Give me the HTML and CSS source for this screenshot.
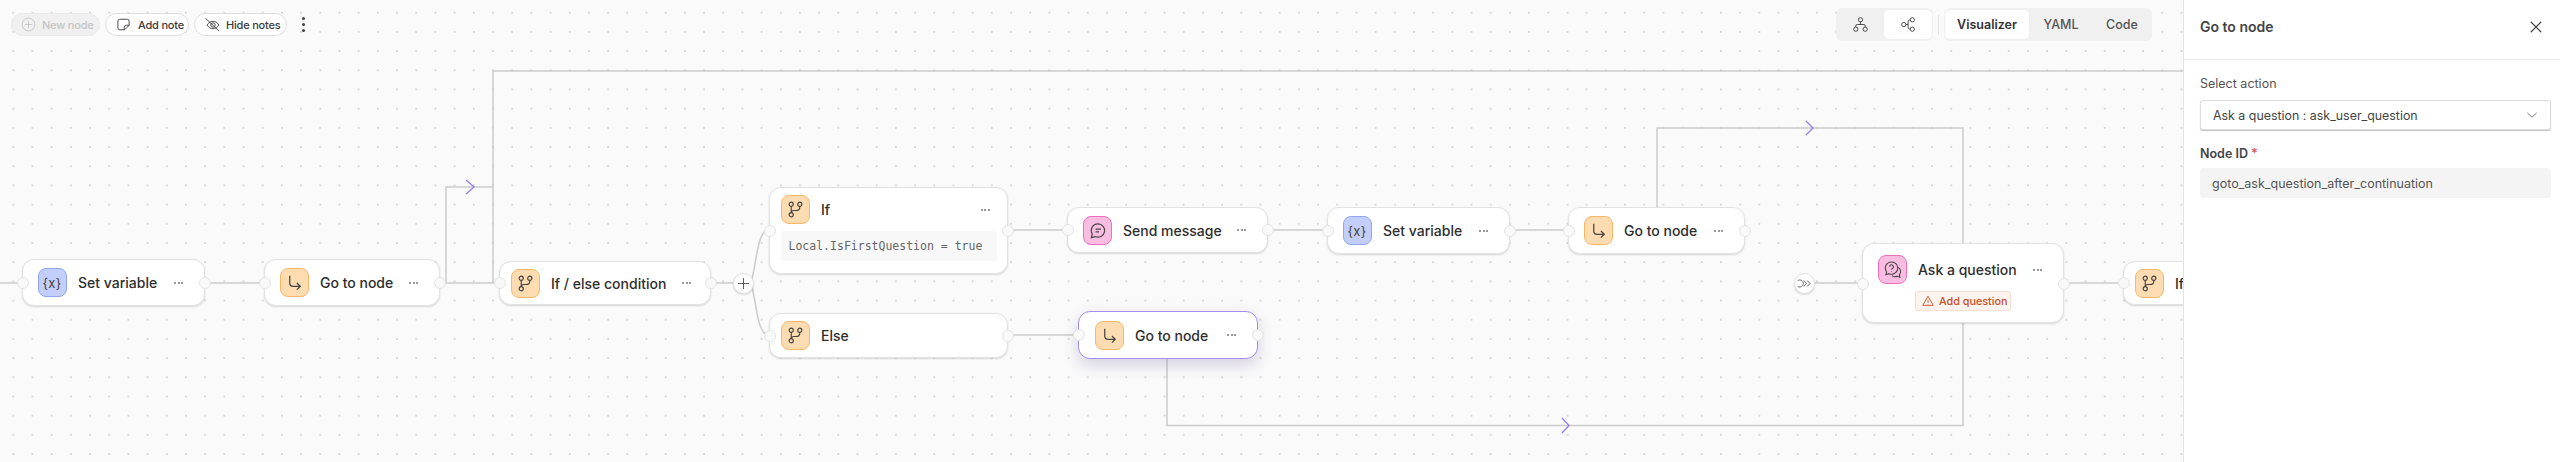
FILE: index.html
```html
<!DOCTYPE html>
<html lang="en">
<head>
<meta charset="utf-8">
<title>Go to node</title>
<link rel="stylesheet" href="styles.css">
</head>
<body>
<svg class="defs" width="0" height="0" aria-hidden="true">
  <symbol id="i-branch" viewBox="0 0 20 20"><g fill="none" stroke="currentColor" stroke-width="1.200"><circle cx="5.500" cy="4.500" r="2.200"/><circle cx="14.500" cy="4.500" r="2.200"/><circle cx="5.500" cy="15.500" r="2.200"/><path d="M5.500 6.700v6.600M14.500 6.700v.8c0 2.200-1.800 3.500-4 3.500H8.200c-1.400 0-2.700.6-2.700 2.200"/></g></symbol>
  <symbol id="i-goto" viewBox="0 0 20 20"><path d="M5 3v7.500c0 2 1.300 3.500 3.500 3.500H16M12.500 10.500l3.600 3.500-3.600 3.500" fill="none" stroke="currentColor" stroke-width="1.300"/></symbol>
  <symbol id="i-msg" viewBox="0 0 20 20"><path d="M10.500 3a7 7 0 1 1-2.800 13.400L3.500 17.500l1-3.800A7 7 0 0 1 10.500 3zM8 8.500h5.500M8 11.500h3.500" fill="none" stroke="currentColor" stroke-width="1.200"/></symbol>
  <symbol id="i-ask" viewBox="0 0 20 20"><g fill="none" stroke="currentColor" stroke-width="1.100"><path d="M9 2a6.500 6.500 0 0 1 0 13c-1 0-1.900-.2-2.700-.6L3 15.500l.8-3.100A6.500 6.500 0 0 1 9 2z"/><path d="M15.500 7.500a5 5 0 0 1 1.700 8l.6 2.700-2.800-1a5.500 5.500 0 0 1-5.500-.7"/><path d="M7 7a2 2 0 1 1 3 1.800c-.7.400-1 .8-1 1.500M9 12v.5"/></g></symbol>
</svg>

<div class="app">
  <main class="canvas">
    <svg class="edges" width="2183" height="462" viewBox="0 0 2183 462" aria-hidden="true">
      <g class="edge">
        <path d="M0 283H22M205 283H264M440 283H499M711 283H744"/>
        <path d="M446 283V187H493M493 283V71H2183M440 283H446"/>
        <path d="M1008 230H1067M1268 230H1327M1510 230H1568"/>
        <path d="M1008 335H1078M1804 283H1862M2064 283H2123"/>
        <path d="M1657 207V128H1963V243M1167 359V425.500H1963V323"/>
        <path d="M751 283C757 262 757 230 769 230M751 283C757 304 757 335 769 335"/>
      </g>
      <g class="chev">
        <path d="M466 180l8 7-8 7"/>
        <path d="M1806 121l7 7-7 7"/>
        <path d="M1562 418l7 7.500-7 7.500"/>
      </g>
    </svg>

    <div class="topbar">
      <div class="tools">
        <button class="pill pill-off"><svg class="pill-icon" viewBox="0 0 20 20"><circle cx="10" cy="10" r="8.500"/><path d="M10 5.500v9M5.500 10h9"/></svg>New node</button>
        <button class="pill pill-note"><svg class="pill-icon" viewBox="0 0 20 20"><path d="M5 3h10a2.500 2.500 0 0 1 2.500 2.500V11l-6 6H5a2.500 2.500 0 0 1-2.500-2.500v-9A2.500 2.500 0 0 1 5 3z"/><path d="M17.500 11h-3.500a3 3 0 0 0-3 3v3"/></svg>Add note</button>
        <button class="pill pill-hide"><svg class="pill-icon eye" viewBox="0 0 24 20"><path d="M4 10c2.500-3.500 5-5 8-5s5.500 1.500 8 5c-2.500 3.500-5 5-8 5s-5.500-1.500-8-5z"/><circle cx="12" cy="10" r="3"/><path d="M2 1l18 17"/></svg>Hide notes</button>
        <span class="kebab"><i></i><i></i><i></i></span>
      </div>
      <div class="views">
        <div class="seg seg-icons">
          <span class="seg-btn"><svg viewBox="0 0 20 20"><circle cx="10" cy="4.500" r="2.500"/><circle cx="4.500" cy="15.500" r="2.500"/><circle cx="15.500" cy="15.500" r="2.500"/><path d="M10 7v3M4.500 13v-1.500a1.500 1.500 0 0 1 1.500-1.500h8a1.500 1.500 0 0 1 1.500 1.500V13"/></svg></span>
          <span class="seg-btn seg-on"><svg viewBox="0 0 20 20"><circle cx="4.500" cy="10" r="2.500"/><circle cx="14.500" cy="4.500" r="2.500"/><circle cx="14.500" cy="15.500" r="2.500"/><path d="M7 10h2.500V7a2.500 2.500 0 0 1 2.500-2.500M9.500 10v3a2.500 2.500 0 0 0 2.500 2.500"/></svg></span>
        </div>
        <span class="views-rule"></span>
        <div class="seg seg-text">
          <span class="tab tab-on">Visualizer</span>
          <span class="tab tab-yaml">YAML</span>
          <span class="tab tab-code">Code</span>
        </div>
      </div>
    </div>

    <div class="node n-set1"><span class="port port-l"></span><span class="ic ic-blue ic-x">{x}</span><span class="title">Set variable</span><span class="more"><i></i><i></i><i></i></span><span class="port port-r"></span></div>
    <div class="node n-goto1"><span class="port port-l"></span><span class="ic ic-orange"><svg><use href="#i-goto"/></svg></span><span class="title">Go to node</span><span class="more"><i></i><i></i><i></i></span><span class="port port-r"></span></div>
    <div class="node n-ifelse"><span class="port port-l"></span><span class="ic ic-orange"><svg><use href="#i-branch"/></svg></span><span class="title">If / else condition</span><span class="more"><i></i><i></i><i></i></span><span class="port port-r"></span></div>
    <span class="round r-plus"><svg viewBox="0 0 20 20"><path d="M10 3.500v13M3.500 10h13"/></svg></span>

    <div class="node node-tall n-if">
      <span class="port port-l port-if"></span>
      <div class="node-head"><span class="ic ic-orange"><svg><use href="#i-branch"/></svg></span><span class="title">If</span><span class="more"><i></i><i></i><i></i></span></div>
      <code class="expr">Local.IsFirstQuestion = true</code>
      <span class="port port-r port-if"></span>
    </div>
    <div class="node n-else"><span class="port port-l"></span><span class="ic ic-orange"><svg><use href="#i-branch"/></svg></span><span class="title">Else</span><span class="port port-r"></span></div>
    <div class="node n-send"><span class="port port-l"></span><span class="ic ic-pink"><svg><use href="#i-msg"/></svg></span><span class="title">Send message</span><span class="more"><i></i><i></i><i></i></span><span class="port port-r"></span></div>
    <div class="node node-sel n-goto-sel"><span class="port port-l"></span><span class="ic ic-orange"><svg><use href="#i-goto"/></svg></span><span class="title">Go to node</span><span class="more"><i></i><i></i><i></i></span><span class="port port-r"></span></div>
    <div class="node n-set2"><span class="port port-l"></span><span class="ic ic-blue ic-x">{x}</span><span class="title">Set variable</span><span class="more"><i></i><i></i><i></i></span><span class="port port-r"></span></div>
    <div class="node n-goto2"><span class="port port-l"></span><span class="ic ic-orange"><svg><use href="#i-goto"/></svg></span><span class="title">Go to node</span><span class="more"><i></i><i></i><i></i></span><span class="port port-r"></span></div>

    <span class="round r-jump"><svg viewBox="0 0 20 20"><path d="M2 6.500c3-1.500 6 0 7 3.500-1 3.500-4 5-7 3.500M9 6.500l3.500 3.500L9 13.500M13 6.500l3.500 3.500-3.500 3.500"/></svg></span>
    <div class="node node-tall n-ask">
      <span class="port port-l port-ask"></span>
      <div class="node-head"><span class="ic ic-pink"><svg><use href="#i-ask"/></svg></span><span class="title">Ask a question</span><span class="more"><i></i><i></i><i></i></span></div>
      <span class="warn"><svg viewBox="0 0 16 16"><path d="M8 2.500l6 10.500H2zM8 6.500v3.500M8 11.300v.7"/></svg>Add question</span>
      <span class="port port-r port-ask"></span>
    </div>
    <div class="node n-iffar"><span class="port port-l"></span><span class="ic ic-orange"><svg><use href="#i-branch"/></svg></span><span class="title">If</span></div>
  </main>

  <aside class="panel">
    <header class="panel-head">
      <h2>Go to node</h2>
      <svg class="close" viewBox="0 0 16 16"><path d="M2 2l12 12M14 2L2 14"/></svg>
    </header>
    <div class="panel-body">
      <label class="lbl">Select action</label>
      <div class="select"><span>Ask a question : ask_user_question</span><svg viewBox="0 0 14 8"><path d="M1.500 1.500L7 6.500l5.500-5"/></svg></div>
      <label class="lbl lbl-strong">Node ID <em>*</em></label>
      <div class="input">goto_ask_question_after_continuation</div>
    </div>
  </aside>
</div>
</body>
</html>
```

FILE: styles.css
```css
* { box-sizing: border-box; }
html, body { margin: 0; height: 100%; }
body { font-family: Inter, "Liberation Sans", sans-serif; color: #333; overflow: hidden; }
.defs { position: absolute; }
.app { display: flex; width: 2560px; height: 462px; }

.canvas {
  position: relative;
  width: 2184px;
  height: 462px;
  overflow: hidden;
  background-color: #fafafa;
  background-image: radial-gradient(circle, #cfcfcf 0.6px, transparent 1px);
  background-size: 19.2px 19.2px;
  background-position: 3.700px 3.100px;
  border-right: 1px solid #e3e3e3;
}
.edges { position: absolute; left: 0; top: 0; }
.edge path { fill: none; stroke: #cbcbcb; stroke-width: 1.500; }
.chev path { fill: none; stroke: #9a7bea; stroke-width: 1.300; }

.topbar { position: relative; display: flex; justify-content: space-between; align-items: flex-start; padding: 8px 31px 0 11px; }
.tools { display: flex; align-items: center; gap: 5px; padding-top: 5px; }
.pill {
  display: flex; align-items: center; gap: 7px;
  height: 23px; padding: 0; white-space: nowrap;
  font: 500 11px Inter, sans-serif; letter-spacing: -.2px; color: #3a3a3a;
  background: #fff; border: 1px solid #dedede; border-radius: 12px;
}
.pill-off { width: 89px; padding-left: 9px; color: #c4c4c4; background: #f0f0f0; border-color: #e9e9e9; gap: 6px; }
.pill-note { width: 84px; padding-left: 10px; }
.pill-hide { width: 93px; padding-left: 9px; gap: 4px; }
.pill-icon { width: 15px; height: 15px; fill: none; stroke: currentColor; stroke-width: 1.200; flex: none; }
.pill-icon.eye { width: 18px; height: 16px; }
.kebab { display: flex; flex-direction: column; gap: 3px; margin-left: 10px; }
.kebab i { display: block; width: 3px; height: 3px; border-radius: 50%; background: #444; }

.views { display: flex; align-items: center; }
.seg { display: flex; height: 33px; padding: 2px 1px; background: #f0f0f0; border-radius: 6px; }
.seg-icons { width: 97px; }
.seg-btn { display: flex; align-items: center; justify-content: center; width: 49px; border-radius: 5px; }
.seg-btn:first-child { width: 48px; }
.seg-btn svg { width: 17px; height: 17px; fill: none; stroke: #444; stroke-width: 1.100; }
.seg-on { background: #fff; }
.views-rule { width: 1px; height: 20px; margin: 0 5px; background: #e4e4e4; }
.seg-text { width: 208px; font-size: 12.500px; font-weight: 500; color: #555; }
.tab { display: flex; align-items: center; justify-content: center; }
.tab-on { width: 84px; background: #fff; border-radius: 5px; font-weight: 600; color: #333; }
.tab-yaml { width: 64px; }
.tab-code { width: 58px; }

.node {
  position: absolute; display: flex; align-items: center;
  height: 47px; padding: 0 21px 0 14.500px;
  background: #fff; border: 1.500px solid #e2e2e2; border-radius: 12px;
  box-shadow: 0 1px 2px rgba(0,0,0,.14);
}
.node-tall { display: block; height: auto; padding: 0; }
.node-head { display: flex; align-items: center; }
.node-sel { border-color: #a78bf0; box-shadow: 0 6px 16px rgba(60,40,120,.2); }

.n-set1 { left: 22px; top: 259px; width: 183px; }
.n-goto1 { left: 264px; top: 259px; width: 176px; }
.n-ifelse { left: 499px; top: 261px; width: 212px; height: 44px; padding-left: 10.500px; }
.n-if { left: 769px; top: 187px; width: 239px; height: 87px; padding: 7px 10.500px 0; }
.n-else { left: 769px; top: 313px; width: 239px; height: 45px; padding-left: 10.500px; }
.n-send { left: 1067px; top: 207px; width: 201px; height: 46px; }
.n-goto-sel { left: 1078px; top: 311px; width: 180px; height: 48px; padding-left: 15.500px; }
.n-set2 { left: 1327px; top: 207px; width: 183px; }
.n-goto2 { left: 1568px; top: 207px; width: 177px; }
.n-ask { left: 1862px; top: 243px; width: 202px; height: 80px; padding: 11px 21px 0 14.500px; }
.n-iffar { left: 2123px; top: 261px; width: 120px; height: 44px; padding-left: 10.500px; }

.ic {
  display: flex; align-items: center; justify-content: center; flex: none;
  width: 29px; height: 29px; border-radius: 8px; border: 1px solid; color: #444;
}
.ic svg { width: 19px; height: 19px; }
.ic-orange { background: #fddcb2; border-color: #fdb566; }
.ic-blue { background: #c3cffa; border-color: #8ea6f5; }
.ic-pink { background: #f9bde2; border-color: #ee6fbd; }
.ic-x { font-size: 13px; letter-spacing: .2px; }

.title { margin-left: 11.500px; font-size: 14px; font-weight: 500; color: #2e2e2e; white-space: nowrap; }
.more { display: flex; gap: 1.500px; margin-left: auto; }
.more i { display: block; width: 2px; height: 2px; border-radius: 50%; background: #777; }
.n-ifelse .more { margin-right: -2px; }
.n-if .more { margin-right: 7px; }

.port {
  position: absolute; top: 50%; width: 12px; height: 12px; margin-top: -6px;
  background: #f9f9f9; border: 1px solid #e3e3e3; border-radius: 50%;
}
.port-l { left: -6.500px; }
.port-r { right: -6.500px; }
.port-if { top: 43px; }
.port-ask { top: 40px; }

.expr {
  display: block; margin-top: 7px; padding: 0 8px; height: 30px;
  font: 400 11.500px/30px "DejaVu Sans Mono", monospace; color: #666;
  background: #f8f8f8; border-radius: 3px; white-space: nowrap;
}
.warn {
  display: inline-flex; align-items: center; gap: 4px;
  position: absolute; left: 52px; top: 47px; width: 96px; height: 20px; padding: 0 0 0 5px;
  font-size: 10.800px; font-weight: 500; color: #c8501e;
  background: #fdf3ef; border: 1px solid #f7dcd0; border-radius: 3px; white-space: nowrap;
}
.warn svg { width: 14px; height: 14px; flex: none; fill: none; stroke: #c8501e; stroke-width: 1; }

.round {
  position: absolute; display: flex; align-items: center; justify-content: center;
  width: 21px; height: 21px; background: #fff; border: 1px solid #e2e2e2; border-radius: 50%;
  box-shadow: 0 1px 2px rgba(0,0,0,.15);
}
.round svg { width: 17px; height: 17px; fill: none; stroke: #444; stroke-width: 1; }
.r-plus { left: 733px; top: 273px; }
.r-jump { left: 1794px; top: 273px; }

.panel { flex: 1; display: flex; flex-direction: column; background: #fff; }
.panel-head { display: flex; align-items: center; justify-content: space-between; height: 60px; padding: 0 17px 6px 16px; border-bottom: 1.500px solid #ececec; }
.panel-head h2 { margin: 0; font-size: 14px; font-weight: 600; color: #444; }
.close { width: 14px; height: 14px; fill: none; stroke: #444; stroke-width: 1.300; }
.panel-body { display: flex; flex-direction: column; padding: 16px 9px 0 16px; }
.lbl { font-size: 12.500px; line-height: 16px; color: #555; }
.lbl-strong { margin-top: 16px; font-weight: 600; color: #444; }
.lbl-strong em { font-style: normal; color: #d9534f; }
.select {
  display: flex; align-items: center; justify-content: space-between;
  height: 30px; margin-top: 8px; padding: 0 12px;
  font-size: 12.400px; color: #444; background: #fff;
  border: 1px solid #dcdcdc; border-radius: 3px; box-shadow: 0 1px 1px rgba(0,0,0,.25);
}
.select svg { width: 12px; height: 8px; fill: none; stroke: #777; stroke-width: 1.100; }
.input {
  display: flex; align-items: center; height: 30px; margin-top: 6px; padding: 0 12px;
  font-size: 12.500px; color: #555; background: #f4f4f4; border-radius: 4px;
}
```
